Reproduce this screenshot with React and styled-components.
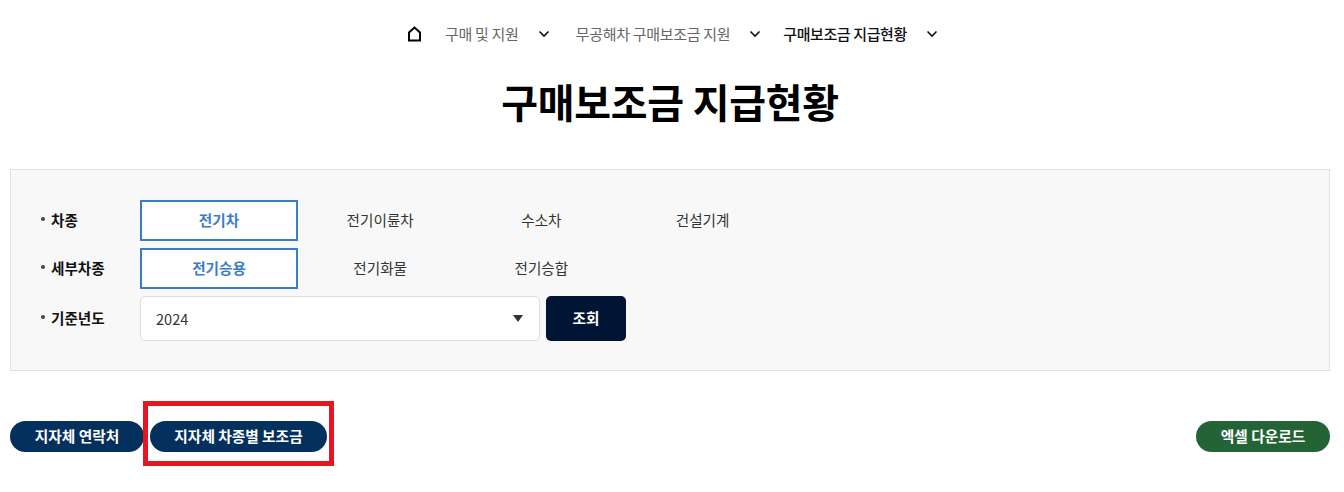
import styled, { createGlobalStyle } from "styled-components";

const GlobalStyle = createGlobalStyle`
  html, body {
    margin: 0;
    background: #fff;
    font-family: "Noto Sans CJK KR", "Noto Sans", sans-serif;
  }
`;

const Page = styled.div`
  width: 1344px;
  height: 492px;
  padding: 0 14px 0 10px;
  box-sizing: border-box;
  position: relative;
  overflow: hidden;
`;

const Breadcrumb = styled.nav`
  display: flex;
  align-items: center;
  height: 20px;
  padding: 24px 0 0 397px;
`;

const HomeLink = styled.span`
  display: flex;
  width: 15px;
  height: 16px;
  margin-right: 23px;
`;

const Crumb = styled.span`
  font-size: 15px;
  letter-spacing: ${(props) => (props.$current ? "-0.4px" : "-0.3px")};
  white-space: nowrap;
  position: relative;
  top: -1px;
  font-weight: ${(props) => (props.$current ? 500 : 400)};
  color: ${(props) => (props.$current ? "#111" : "#666")};
`;

const Chevron = styled.svg`
  width: 12px;
  height: 8px;
  margin: 0 ${(props) => props.$after}px 0 ${(props) => props.$before}px;
  flex: none;
`;

const Title = styled.h1`
  margin: 26px 0 0;
  height: 63px;
  line-height: 63px;
  font-size: 40px;
  font-weight: 700;
  letter-spacing: -0.3px;
  text-align: center;
  color: #000;
`;

const SearchPanel = styled.section`
  margin-top: 36px;
  width: 1320px;
  height: 202px;
  box-sizing: border-box;
  padding: 30px 0 0 30px;
  background: #f8f8f8;
  border: 1px solid #e0e0e0;
  display: flex;
  flex-direction: column;
  gap: 7px;
`;

const Row = styled.div`
  display: flex;
  align-items: center;
`;

const Label = styled.span`
  width: 99px;
  flex: none;
  padding-bottom: 3px;
  font-size: 14.6px;
  font-weight: 700;
  color: #111;
  display: flex;
  align-items: center;
  gap: 6px;
  &::before {
    content: "";
    width: 4px;
    height: 4px;
    border-radius: 50%;
    background: #444;
  }
`;

const Option = styled.button`
  width: 158px;
  height: 41px;
  margin-right: 3.2px;
  padding: 0 0 2px;
  box-sizing: border-box;
  font: inherit;
  font-size: 14.6px;
  font-weight: ${(props) => (props.$active ? 700 : 400)};
  color: ${(props) => (props.$active ? "#3a7cc8" : "#333")};
  background: ${(props) => (props.$active ? "#fff" : "transparent")};
  border: 2px solid ${(props) => (props.$active ? "#3a7cc8" : "transparent")};
`;

const YearSelect = styled.div`
  width: 400px;
  height: 45px;
  box-sizing: border-box;
  padding: 0 16px 0 15px;
  background: #fff;
  border: 1px solid #ddd;
  border-radius: 5px;
  display: flex;
  align-items: center;
  justify-content: space-between;
  font-size: 14.6px;
  color: #333;
`;

const Caret = styled.span`
  width: 0;
  height: 0;
  border-left: 5px solid transparent;
  border-right: 5px solid transparent;
  border-top: 7px solid #333;
`;

const SearchButton = styled.button`
  width: 80px;
  height: 45px;
  margin-left: 6px;
  padding: 0 0 2px;
  font: inherit;
  font-size: 14.6px;
  font-weight: 700;
  color: #fff;
  background: #001433;
  border: 0;
  border-radius: 5px;
`;

const Actions = styled.div`
  margin-top: 50px;
  display: flex;
  align-items: center;
  gap: 6px;
`;

const Pill = styled.button`
  height: 31px;
  width: ${(props) => props.$width}px;
  margin-left: ${(props) => (props.$push ? "auto" : "0")};
  padding: 0 0 2px;
  font: inherit;
  font-size: 14.7px;
  font-weight: 700;
  color: #fff;
  background: ${(props) => props.$bg};
  border: 0;
  border-radius: 16px;
`;

const Highlight = styled.div`
  position: absolute;
  left: 143px;
  top: 401px;
  width: 191px;
  height: 65px;
  box-sizing: border-box;
  border: 5px solid #e8141f;
  pointer-events: none;
`;

const ChevronIcon = (props) => (
  <Chevron viewBox="0 0 12 8" fill="none" stroke="#111" strokeWidth="1.6" {...props}>
    <path d="M1.5 1.5 6 6l4.5-4.5" />
  </Chevron>
);

const App = () => {
  return (
    <Page>
      <GlobalStyle />
      <Breadcrumb>
        <HomeLink>
          <svg width="15" height="16" viewBox="0 0 15 16" fill="none" stroke="#000" strokeWidth="2">
            <path d="M2 14.5V6.5L7.5 1.5 13 6.5v8z" />
          </svg>
        </HomeLink>
        <Crumb>구매 및 지원</Crumb>
        <ChevronIcon $before={19} $after={26} />
        <Crumb>무공해차 구매보조금 지원</Crumb>
        <ChevronIcon $before={19} $after={22} />
        <Crumb $current>구매보조금 지급현황</Crumb>
        <ChevronIcon $before={19} $after={0} />
      </Breadcrumb>
      <Title>구매보조금 지급현황</Title>
      <SearchPanel>
        <Row>
          <Label>차종</Label>
          <Option $active>전기차</Option>
          <Option>전기이륜차</Option>
          <Option>수소차</Option>
          <Option>건설기계</Option>
        </Row>
        <Row>
          <Label>세부차종</Label>
          <Option $active>전기승용</Option>
          <Option>전기화물</Option>
          <Option>전기승합</Option>
        </Row>
        <Row>
          <Label>기준년도</Label>
          <YearSelect>
            2024
            <Caret />
          </YearSelect>
          <SearchButton>조회</SearchButton>
        </Row>
      </SearchPanel>
      <Actions>
        <Pill $width={134} $bg="#03305c">지자체 연락처</Pill>
        <Pill $width={177} $bg="#03305c">지자체 차종별 보조금</Pill>
        <Pill $width={134} $bg="#236336" $push>엑셀 다운로드</Pill>
      </Actions>
      <Highlight />
    </Page>
  );
};

export default App;
